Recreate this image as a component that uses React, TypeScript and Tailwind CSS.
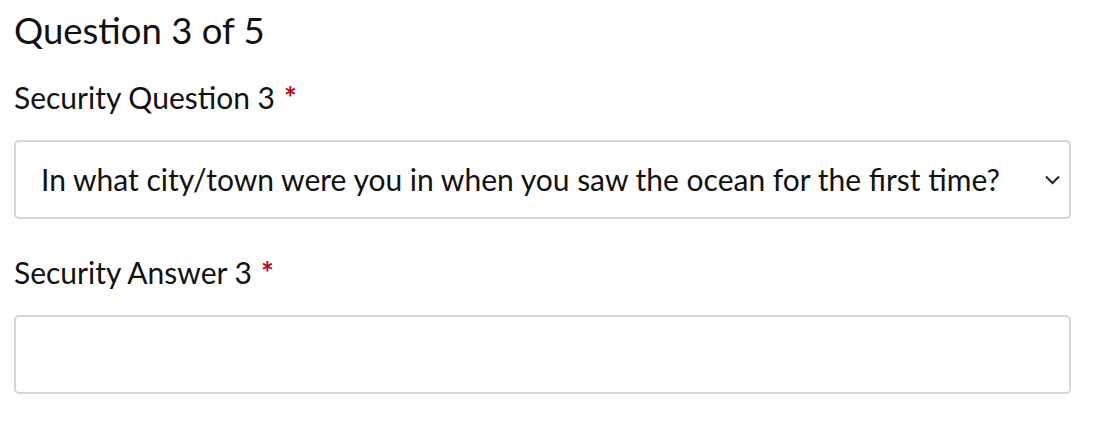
import { useState } from 'react';

const questions = [
  'In what city/town were you in when you saw the ocean for the first time?',
  'What was the name of your first pet?',
  'What is the name of the street you grew up on?',
];

const RequiredMark = () => <span className="ml-[9px] font-bold text-[#c00018]">*</span>;

const App = () => {
  const [question, setQuestion] = useState(questions[0]);
  const [answer, setAnswer] = useState('');

  return (
    <div className="min-h-screen bg-white text-[#111] font-['Lato','Noto_Sans',sans-serif]">
      <div className="w-[1071px] pl-[14px]">
        <h2 className="pt-[6px] text-[36.5px] leading-[48px] font-normal">Question 3 of 5</h2>

        <div className="mt-[25px]">
          <label htmlFor="securityQuestion3" className="block text-[30px] leading-[36px]">
            Security Question 3
            <RequiredMark />
          </label>
          <div className="relative mt-[25px]">
            <select
              id="securityQuestion3"
              value={question}
              onChange={(e) => setQuestion(e.target.value)}
              className="block h-[79px] w-full appearance-none rounded-[5px] border-2 border-[#d3d6dc] bg-white pl-[25px] pr-[60px] text-[30px] text-[#111] outline-none"
            >
              {questions.map((q) => (
                <option key={q} value={q}>
                  {q}
                </option>
              ))}
            </select>
            <svg
              className="pointer-events-none absolute right-[11px] top-1/2 h-[10px] w-[15px] -translate-y-1/2"
              viewBox="0 0 15 10"
              fill="none"
              stroke="#222"
              strokeWidth="2"
            >
              <path d="M1 1.5 L7.5 8 L14 1.5" />
            </svg>
          </div>
        </div>

        <div className="mt-[35px]">
          <label htmlFor="securityAnswer3" className="block text-[30px] leading-[36px]">
            Security Answer 3
            <RequiredMark />
          </label>
          <input
            id="securityAnswer3"
            type="text"
            value={answer}
            onChange={(e) => setAnswer(e.target.value)}
            className="mt-[25px] block h-[79px] w-full rounded-[5px] border-2 border-[#d3d6dc] bg-white px-[25px] text-[30px] outline-none"
          />
        </div>
      </div>
    </div>
  );
};

export default App;
